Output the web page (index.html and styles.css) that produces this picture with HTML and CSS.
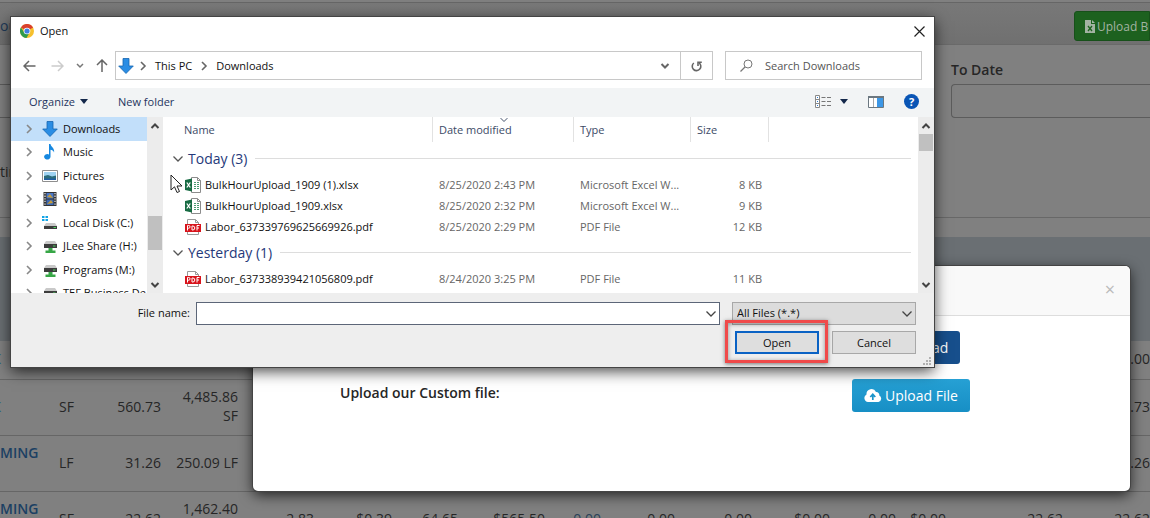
FILE: index.html
```html
<!DOCTYPE html>
<html lang="en">
<head>
<meta charset="utf-8">
<title>Upload Bulk Hours</title>
<link rel="stylesheet" href="styles.css">
</head>
<body>
<svg class="defs" width="0" height="0" aria-hidden="true">
  <symbol id="right" viewBox="0 0 8 10"><path d="M2 1l4 4-4 4" fill="none" stroke="currentColor" stroke-width="1.6"/></symbol>
  <symbol id="down" viewBox="0 0 12 8"><path d="M1.500 1.500L6 6l4.500-4.500" fill="none" stroke="currentColor" stroke-width="1.300"/></symbol>
  <symbol id="scrollup" viewBox="0 0 10 8"><path d="M1.500 6L5 2.500 8.500 6" fill="none" stroke="currentColor" stroke-width="2"/></symbol>
  <symbol id="scrolldown" viewBox="0 0 10 8"><path d="M1.500 2L5 5.500 8.500 2" fill="none" stroke="currentColor" stroke-width="2"/></symbol>
  <symbol id="arrowdown" viewBox="0 0 16 16"><path d="M5 .5h6V8h4.300L8 15.500.7 8H5z" fill="#2a8de4" stroke="#1565b0" stroke-width=".8"/></symbol>
  <symbol id="drive" viewBox="0 0 16 16"><path d="M4 3h9l2 3H2z" fill="#c9c9c9"/><path d="M2 6h13v4H2z" fill="#3c3c3c"/><path d="M11 7.500h2.500v1H11z" fill="#49d15c"/><path d="M6.500 10h4v2.500h3V15h-10v-2.500h3z" fill="#37a646"/></symbol>
  <symbol id="disk" viewBox="0 0 16 16"><path d="M0 1h2.500v2H0zM3.500 1H6v2H3.500zM0 4h2.500v2H0zM3.500 4H6v2H3.500z" fill="#12a4e6"/><path d="M4 8h9l2 3H2z" fill="#c9c9c9"/><path d="M2 11h13v3H2z" fill="#3c3c3c"/><path d="M11.500 12h2.500v1h-2.500z" fill="#49d15c"/></symbol>
  <symbol id="xlsx" viewBox="0 0 16 16"><path d="M6.500.5h6l3 3v12h-9z" fill="#fff" stroke="#8c8c8c"/><path d="M12.500.5v3h3" fill="none" stroke="#8c8c8c"/><path d="M9 5.500h2M12 5.500h2M9 7.500h2M12 7.500h2M9 9.500h2M12 9.500h2M9 11.500h2M12 11.500h2" stroke="#4b9a72"/><path d="M0 3l7-1.500v13L0 13z" fill="#176b43"/><path d="M1.800 5.500l3.500 5M5.300 5.500l-3.500 5" stroke="#fff" stroke-width="1.300"/></symbol>
  <symbol id="pdf" viewBox="0 0 16 16"><path d="M2.500.5h8l3 3v12h-11z" fill="#fff" stroke="#999"/><path d="M10.500.5v3h3" fill="none" stroke="#999"/><path d="M0 5h16v8H0z" fill="#d8141c"/><path d="M2.500 11.500v-5h1.200a1.300 1.300 0 010 2.700H2.500M7 7v4h.8a2 2 0 000-4zM12 11.500v-5h2.500M12 9h2" fill="none" stroke="#fff"/></symbol>
</svg>

<main class="page">
  <header class="topbar">
    <a class="crumb" href="#">our</a>
    <button class="bulk" type="button">
      <svg width="10" height="13" viewBox="0 0 10 13"><path d="M0 0h6v4h4v9H0z" fill="#a3b3a3"/><path d="M7 0l3 3H7z" fill="#a3b3a3"/><path d="M3 6l4 5M7 6l-4 5" stroke="#1d611f" stroke-width="1.300"/></svg>
      Upload Bulk Hours
    </button>
  </header>
  <section class="filters">
    <div class="field first">
      <input type="text" aria-label="From Date">
      <span class="note">ting</span>
    </div>
    <div class="field">
      <label for="to">To Date</label>
      <input id="to" type="text">
    </div>
  </section>
  <div class="strip"></div>
  <table class="grid">
    <colgroup><col class="w59"><col class="w42"><col class="w60"><col class="w77"><col class="w76"><col class="w78"><col class="w66"><col class="w87"><col class="w56"><col class="w74"><col class="w77"><col class="w78"><col class="w66"><col class="w50"><col class="w117"><col></colgroup>
    <thead><tr><th colspan="16"></th></tr></thead>
    <tbody>
      <tr class="short"><td class="name cut">K</td><td colspan="14"></td><td>0.00</td></tr>
      <tr><td class="name cut">K</td><td class="unit">SF</td><td>560.73</td><td class="total">4,485.86 SF</td><td colspan="11"></td><td>560.73</td></tr>
      <tr><td class="name">MING<br>&nbsp;</td><td class="unit">LF</td><td>31.26</td><td class="total">250.09 LF</td><td colspan="11"></td><td>31.26</td></tr>
      <tr><td class="name">MING<br>&nbsp;</td><td class="unit">SF</td><td>22.62</td><td class="total">1,462.40 SF</td><td>2.83</td><td>$0.39</td><td>64.65</td><td>$565.50</td><td class="link">0.00</td><td>0.00</td><td>0.00</td><td>$0.00</td><td>0.00</td><td>$0.00</td><td>22.62</td><td>22.62</td></tr>
    </tbody>
  </table>
</main>

<section class="modal" aria-label="Upload">
  <header class="modal-head"><button class="x" type="button" aria-label="Close">×</button></header>
  <div class="modal-body">
    <span></span>
    <button class="btn dark" type="button">Download</button>
    <strong>Upload our Custom file:</strong>
    <button class="btn" type="button">
      <svg width="18" height="13" viewBox="0 0 18 13"><path d="M4 13a4 4 0 01-1.500-7.500A5 5 0 0112 3a3 3 0 013.300 3.500A3.500 3.500 0 0114.500 13z" fill="#fff"/><path d="M8.800 11V6M6.300 8l2.500-2.700L11.300 8" fill="none" stroke="#1a94ca" stroke-width="1.700"/></svg>
      Upload File
    </button>
  </div>
</section>

<section class="dialog" aria-label="Open">
  <header class="title">
    <svg width="14" height="14" viewBox="0 0 14 14"><circle cx="7" cy="7" r="7" fill="#f6c02d"/><path d="M7 7L.9 3.500A7 7 0 0113.100 3.500z" fill="#d9402f"/><path d="M.9 3.500A7 7 0 006.500 14L9.500 8.500 7 7 4 8z" fill="#2f9a4c"/><circle cx="7" cy="7" r="3.300" fill="#fff"/><circle cx="7" cy="7" r="2.600" fill="#3f7fe0"/></svg>
    <h1>Open</h1>
    <button type="button" aria-label="Close window"><svg width="11" height="11" viewBox="0 0 11 11"><path d="M.5.5l10 10M10.500.5l-10 10" stroke="#222" stroke-width="1.200"/></svg></button>
  </header>

  <nav class="address">
    <div class="arrows">
      <button type="button" aria-label="Back"><svg width="13" height="12" viewBox="0 0 13 12"><path d="M6 1L1 6l5 5M1 6h11.500" fill="none" stroke="#666" stroke-width="1.500"/></svg></button>
      <button type="button" aria-label="Forward"><svg width="13" height="12" viewBox="0 0 13 12"><path d="M7 1l5 5-5 5M12 6H.5" fill="none" stroke="#ccc" stroke-width="1.500"/></svg></button>
      <button type="button" aria-label="Recent"><svg width="8" height="6" viewBox="0 0 8 6"><path d="M1 1l3 3 3-3" fill="none" stroke="#777" stroke-width="1.500"/></svg></button>
      <button type="button" aria-label="Up"><svg width="12" height="13" viewBox="0 0 12 13"><path d="M1 6l5-5 5 5M6 1v12" fill="none" stroke="#666" stroke-width="1.500"/></svg></button>
    </div>
    <div class="path">
      <svg width="16" height="16"><use href="#arrowdown"/></svg>
      <svg class="sep" width="8" height="10"><use href="#right"/></svg>
      <a href="#">This PC</a>
      <svg class="sep" width="8" height="10"><use href="#right"/></svg>
      <a href="#">Downloads</a>
      <button class="drop" type="button" aria-label="Previous locations"><svg width="10" height="8"><use href="#scrolldown"/></svg></button>
      <button class="reload" type="button" aria-label="Refresh"><svg width="11" height="12" viewBox="0 0 11 12"><path d="M2.800 3A4.300 4.300 0 108 2.800" fill="none" stroke="#666" stroke-width="1.600"/><path d="M7 6V2.200h3.800" fill="none" stroke="#666" stroke-width="1.600"/></svg></button>
    </div>
    <div class="search">
      <svg width="13" height="13" viewBox="0 0 13 13"><circle cx="8" cy="5" r="4" fill="none" stroke="#777"/><path d="M5 8L.5 12.500" stroke="#777" stroke-width="1.200"/></svg>
      <input type="text" placeholder="Search Downloads" aria-label="Search Downloads">
    </div>
  </nav>

  <div class="toolbar">
    <button type="button">Organize <svg width="8" height="5" viewBox="0 0 8 5"><path d="M0 0h8L4 5z" fill="#14284b"/></svg></button>
    <button type="button">New folder</button>
    <button class="view" type="button" aria-label="Change view">
      <svg width="16" height="13" viewBox="0 0 16 13"><path d="M.5.5h4v12h-4zM.5 4.500h4M.5 8.500h4" fill="#fff" stroke="#888"/><path d="M6.500 2.500h4M12 2.500h4M6.500 6.500h4M12 6.500h4M6.500 10.500h4M12 10.500h4" stroke="#777"/><path d="M2 2.500h1M2 6.500h1M2 10.500h1" stroke="#2b7cd3"/></svg>
      <svg width="8" height="5" viewBox="0 0 8 5"><path d="M0 0h8L4 5z" fill="#14284b"/></svg>
    </button>
    <button type="button" aria-label="Preview pane"><svg width="16" height="12" viewBox="0 0 16 12"><path d="M.5.5h15v11H.5z" fill="#fff" stroke="#6b7780"/><path d="M0 1h16" stroke="#6b7780" stroke-width="2"/><path d="M5.500 2v9" stroke="#aaa"/><path d="M9 2h6v9H9z" fill="#3d97e6"/></svg></button>
    <button class="help" type="button" aria-label="Help">?</button>
  </div>

  <div class="body">
    <ul class="tree">
      <li class="on"><svg class="tw" width="8" height="10"><use href="#right"/></svg><svg width="16" height="16"><use href="#arrowdown"/></svg>Downloads</li>
      <li><svg class="tw" width="8" height="10"><use href="#right"/></svg><svg width="16" height="16" viewBox="0 0 16 16"><path d="M7 0h1.500c.3 3 4.500 4 3.500 8.500C11.500 6.500 10 6 8.500 5.800V13A3.200 2.700 0 117 10.500z" fill="#1688e0"/></svg>Music</li>
      <li><svg class="tw" width="8" height="10"><use href="#right"/></svg><svg width="16" height="16" viewBox="0 0 16 16"><path d="M.5 2.500h15v11H.5z" fill="#fff" stroke="#8e8e8e"/><path d="M2 4h12v8H2z" fill="#9fd3f2"/><path d="M2 8l4-1 4 1.500 4-1V12H2z" fill="#2b6c7b"/><path d="M2 10.500h12V12H2z" fill="#1f5ca3"/></svg>Pictures</li>
      <li><svg class="tw" width="8" height="10"><use href="#right"/></svg><svg width="16" height="16" viewBox="0 0 16 16"><path d="M1.500 1h13v14h-13z" fill="#333"/><path d="M3 2v13M13 2v13" stroke="#ddd" stroke-width="1.300" stroke-dasharray="1.300 1.300"/><path d="M4.500 2h7v5.500h-7z" fill="#4b79c9"/><path d="M4.500 8.500h7V14h-7z" fill="#3b68b5"/><path d="M5 6l3-3 3 4zM5 13l4-4 2 3z" fill="#c49b39"/></svg>Videos</li>
      <li><svg class="tw" width="8" height="10"><use href="#right"/></svg><svg width="16" height="16"><use href="#disk"/></svg>Local Disk (C:)</li>
      <li><svg class="tw" width="8" height="10"><use href="#right"/></svg><svg width="16" height="16"><use href="#drive"/></svg>JLee Share (H:)</li>
      <li><svg class="tw" width="8" height="10"><use href="#right"/></svg><svg width="16" height="16"><use href="#drive"/></svg>Programs (M:)</li>
      <li><svg class="tw" width="8" height="10"><use href="#right"/></svg><svg width="16" height="16"><use href="#drive"/></svg>TEF Business De</li>
    </ul>
    <div class="scroll"><svg width="10" height="8"><use href="#scrollup"/></svg><i class="thumb low"></i><svg width="10" height="8"><use href="#scrolldown"/></svg></div>
    <table class="files">
      <colgroup><col class="c-name"><col class="c-date"><col class="c-type"><col class="c-size"><col></colgroup>
      <thead><tr><th><span>Name</span></th><th class="sorted"><span>Date modified</span><svg width="10" height="6" viewBox="0 0 12 8"><use href="#down"/></svg></th><th><span>Type</span></th><th><span>Size</span></th><th></th></tr></thead>
      <tbody>
        <tr class="group"><td colspan="5"><div><svg width="12" height="8"><use href="#down"/></svg><b>Today (3)</b><hr></div></td></tr>
        <tr><td><div><svg width="16" height="16"><use href="#xlsx"/></svg>BulkHourUpload_1909 (1).xlsx</div></td><td>8/25/2020 2:43 PM</td><td>Microsoft Excel W...</td><td>8 KB</td><td></td></tr>
        <tr><td><div><svg width="16" height="16"><use href="#xlsx"/></svg>BulkHourUpload_1909.xlsx</div></td><td>8/25/2020 2:32 PM</td><td>Microsoft Excel W...</td><td>9 KB</td><td></td></tr>
        <tr><td><div><svg width="16" height="16"><use href="#pdf"/></svg>Labor_637339769625669926.pdf</div></td><td>8/25/2020 2:29 PM</td><td>PDF File</td><td>12 KB</td><td></td></tr>
        <tr class="group"><td colspan="5"><div><svg width="12" height="8"><use href="#down"/></svg><b>Yesterday (1)</b><hr></div></td></tr>
        <tr><td><div><svg width="16" height="16"><use href="#pdf"/></svg>Labor_637338939421056809.pdf</div></td><td>8/24/2020 3:25 PM</td><td>PDF File</td><td>11 KB</td><td></td></tr>
      </tbody>
    </table>
    <div class="scroll"><svg width="10" height="8"><use href="#scrollup"/></svg><i class="thumb"></i><svg width="10" height="8"><use href="#scrolldown"/></svg></div>
  </div>

  <footer class="foot">
    <div class="line">
      <label for="fname">File name:</label>
      <div class="combo"><input id="fname" type="text"><svg width="12" height="8"><use href="#down"/></svg></div>
      <div class="pick"><select aria-label="File type"><option>All Files (*.*)</option></select><svg width="12" height="8"><use href="#down"/></svg></div>
    </div>
    <div class="actions">
      <button class="ok" type="button">Open</button>
      <button type="button">Cancel</button>
    </div>
    <svg class="grip" width="9" height="9" viewBox="0 0 9 9"><path d="M6 0h2v2H6zM3 3h2v2H3zM6 3h2v2H6zM0 6h2v2H0zM3 6h2v2H3zM6 6h2v2H6z" fill="#b0b0b0"/></svg>
  </footer>
  <div class="mark"></div>
</section>

<svg class="cursor" width="13" height="20" viewBox="0 0 13 20"><path d="M1 1v15l3.500-3.200L7 18.500l2.500-1L7 12h5z" fill="#fff" stroke="#222"/></svg>
</body>
</html>
```
FILE: styles.css
```css
* { box-sizing: border-box; }
body {
  margin: 0;
  height: 100vh;
  position: relative;
  overflow: hidden;
  background: #808080;
  color: #262626;
  font: 14px/19px "Open Sans", sans-serif;
}
button, input, select { font: inherit; color: inherit; margin: 0; border-radius: 0; }
button { padding: 0; border: 0; background: none; }
a { color: inherit; text-decoration: none; }
svg { flex: none; }
.defs { position: absolute; }

/* Page under the overlays */
.page { height: 100%; overflow: hidden; }
.topbar {
  display: flex;
  align-items: center;
  justify-content: space-between;
  height: 45px;
  padding-top: 8px;
  border-bottom: 1px solid #6a6a6a;
  background: linear-gradient(#808080 2px, #666 2px, #666 3px, #787878 3px, #707070);
}
.crumb { padding-bottom: 2px; color: #203a58; }
.bulk {
  display: flex;
  align-items: center;
  gap: 2px;
  width: 76px;
  height: 30px;
  padding-left: 10px;
  border: 1px solid #17501a;
  border-radius: 3px 0 0 3px;
  background: #1d611f;
  color: #a3b3a3;
  font-size: 12px;
  white-space: nowrap;
  overflow: hidden;
}
.filters {
  display: grid;
  grid-template-columns: 951px 1fr;
  height: 173px;
  padding-top: 15px;
  border-bottom: 1px solid #686868;
}
.field label { display: block; font-weight: 600; height: 24px; }
.field input {
  display: block;
  width: 100%;
  height: 34px;
  border: 1px solid #5c5c5c;
  border-right: 0;
  border-radius: 4px 0 0 4px;
  background: #808080;
}
.field.first { padding: 24px 350px 0 0; }
.field.first input { border-left: 0; border-radius: 0; }
.note { display: block; margin-top: 44px; }
.strip { height: 19px; }
.grid { width: 100%; table-layout: fixed; border-collapse: collapse; }
.grid th { height: 104px; padding: 0; background: #6a6f73; }
.grid td {
  height: 56px;
  padding: 0 0 2px;
  text-align: right;
  border-bottom: 1px solid #666;
}
.grid .short td { height: 38px; }
.grid .total { padding-left: 8px; }
.grid .name, .grid .unit { text-align: left; }
.grid .name { color: #1b3f63; font-weight: 600; }
.grid .cut { text-indent: -8px; color: #2a6080; }
.grid .link { color: #2a4058; }
.w42 { width: 42px; } .w50 { width: 50px; } .w56 { width: 56px; }
.w59 { width: 59px; } .w60 { width: 60px; } .w66 { width: 66px; }
.w74 { width: 74px; } .w76 { width: 76px; } .w77 { width: 77px; }
.w78 { width: 78px; } .w87 { width: 87px; } .w117 { width: 117px; }

/* Modal */
.modal {
  position: absolute;
  left: 253px;
  right: 20px;
  top: 266px;
  height: 225px;
  border-radius: 5px;
  background: #fff;
  box-shadow: 0 0 0 1px #444, 0 4px 14px rgba(0, 0, 0, .75);
}
.modal-head {
  display: flex;
  justify-content: flex-end;
  align-items: center;
  height: 50px;
  padding: 0 15px 3px;
  border-bottom: 1px solid #ddd;
  border-radius: 5px 5px 0 0;
  background: #f9f9f9;
}
.x { color: #bbb; font-size: 18px; }
.modal-body {
  display: grid;
  grid-template-columns: 512px 1fr;
  row-gap: 15px;
  padding: 15px 0 0 87px;
  justify-items: start;
}
.modal-body strong { font-weight: 600; padding-top: 4px; }
.btn {
  display: flex;
  align-items: center;
  gap: 3px;
  height: 33px;
  padding: 0 12px;
  border-radius: 3px;
  background: linear-gradient(#26a0d4, #178fc5);
  color: #fff;
}
.btn.dark { padding-left: 30px; background: #174f8c; }

/* File dialog */
.dialog {
  position: absolute;
  left: 11px;
  top: 17px;
  width: 923px;
  background: #fff;
  color: #111;
  font-size: 11px;
  line-height: 16px;
  box-shadow: 0 0 0 1px #444, 0 4px 14px rgba(0, 0, 0, .75);
}
.title {
  display: flex;
  align-items: center;
  gap: 6px;
  height: 28px;
  padding: 0 9px;
}
.title h1 { flex: 1; margin: 0; font-size: 11px; font-weight: 400; }
.title button { display: flex; }
.address { display: flex; height: 43px; padding: 6px 12px 8px; }
.arrows { display: flex; align-items: center; gap: 15px; width: 92px; }
.arrows button { display: flex; }
.arrows button:nth-child(n+3) { margin-left: -3px; }
.path {
  display: flex;
  align-items: center;
  width: 598px;
  padding-left: 2px;
  border: 1px solid #c8c8c8;
}
.path a { margin: 0 8px; }
.sep { margin-left: 5px; color: #666; }
.path a + .sep { margin-left: 0; }
.drop { display: flex; margin-left: auto; padding: 0 10px; color: #666; }
.reload {
  display: flex;
  align-self: stretch;
  align-items: center;
  justify-content: center;
  width: 32px;
  border-left: 1px solid #c8c8c8;
}
.search {
  display: flex;
  flex: 1;
  align-items: center;
  gap: 12px;
  margin-left: 12px;
  padding-left: 14px;
  border: 1px solid #c8c8c8;
}
.search input { flex: 1; min-width: 0; padding: 0; border: 0; outline: 0; background: none; }
.search input::placeholder { color: #555; opacity: 1; }
.toolbar {
  display: flex;
  align-items: center;
  gap: 20px;
  height: 29px;
  padding: 0 15px 2px 18px;
  background: #f2f4f5;
  color: #1e355e;
}
.toolbar button { display: flex; align-items: center; gap: 5px; }
.toolbar button + button { margin-left: 10px; }
.toolbar .view { margin-left: auto; gap: 9px; }
.toolbar .view + button { margin-left: 0; }
.toolbar .help {
  justify-content: center;
  width: 15px;
  height: 15px;
  margin-left: 0;
  border-radius: 50%;
  background: #0a55b5;
  color: #fff;
  font-weight: 700;
}
.body { display: flex; height: 176px; overflow: hidden; }
.tree {
  display: grid;
  grid-template-rows: repeat(8, 1fr);
  width: 136px;
  height: 188px;
  margin: 0;
  padding: 0;
  list-style: none;
}
.tree li {
  display: flex;
  align-items: center;
  gap: 5px;
  padding-left: 14px;
  white-space: nowrap;
  overflow: hidden;
}
.tree .on { background: #c2dffa; }
.tw { margin-right: 4px; color: #888; }
.scroll {
  display: flex;
  flex-direction: column;
  align-items: center;
  width: 16px;
  padding: 5px 0 4px;
  background: #ececec;
  color: #444;
}
.thumb { width: 14px; height: 17px; margin: 4px 0 auto; background: #c0c0c0; }
.thumb.low { height: 34px; margin: auto 0 31px; }
.files {
  flex: 1;
  align-self: flex-start;
  table-layout: fixed;
  border-collapse: collapse;
  color: #666;
}
.c-name { width: 270px; }
.c-date { width: 141px; }
.c-type { width: 117px; }
.c-size { width: 78px; }
.files th {
  position: relative;
  height: 26px;
  padding: 0 0 1px;
  text-align: left;
  font-weight: 400;
  color: #3c4a66;
}
.files th span {
  display: block;
  padding: 5px 6px 4px;
  border-right: 1px solid #e2e2e2;
}
.files th:first-child span { padding-left: 21px; }
.sorted svg { position: absolute; left: 66px; top: 0; }
.files td { height: 21px; padding: 0 0 0 6px; white-space: nowrap; }
.files td:first-child { padding-left: 22px; color: #111; }
.files td:nth-child(4) { padding: 0 7px 0 0; text-align: right; }
.files td div { display: flex; align-items: center; gap: 4px; }
.files .group td { height: 31px; padding: 0 7px 0 9px; color: #555; }
.files b { font-size: 14px; font-weight: 400; color: #25397a; }
.files hr { flex: 1; margin: 0 0 0 4px; border: 0; border-top: 1px solid #ddd; }
.foot {
  position: relative;
  padding: 9px 18px 13px 120px;
  background: #eee;
}
.line { display: flex; align-items: center; }
.line label { width: 65px; padding: 0 6px 2px 0; text-align: right; white-space: nowrap; }
.combo, .pick { position: relative; height: 23px; }
.combo { flex: 1; }
.pick { width: 184px; margin-left: 12px; }
.combo input, .pick select { width: 100%; height: 23px; border: 1px solid #5c6678; background: #fff; }
.pick select { padding: 0 4px 2px; border-color: #a8a8a8; background: #dcdcdc; appearance: none; }
.combo svg, .pick svg { position: absolute; right: 3px; top: 8px; color: #444; }
.actions { display: flex; justify-content: flex-end; gap: 13px; margin-top: 6px; }
.actions button { width: 84px; height: 23px; border: 1px solid #a8a8a8; background: #dedede; }
.actions .ok { border: 2px solid #0a62c4; }
.grip { position: absolute; right: 2px; bottom: 1px; }
.mark {
  position: absolute;
  left: 714px;
  bottom: 4px;
  width: 103px;
  height: 43px;
  border: 3px solid #f04a4a;
  box-shadow: 0 1px 4px rgba(0, 0, 0, .5), inset 0 1px 4px rgba(0, 0, 0, .4);
}
.cursor { position: absolute; left: 170px; top: 174px; }
```
